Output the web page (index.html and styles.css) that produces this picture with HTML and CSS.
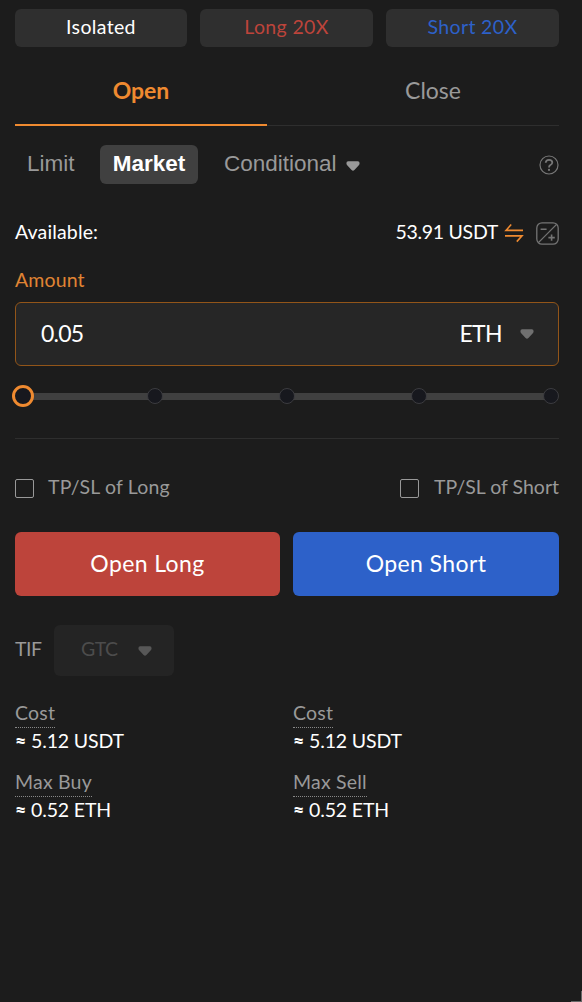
FILE: index.html
```html
<!DOCTYPE html>
<html lang="en">
<head>
<meta charset="utf-8">
<title>Open position</title>
<link rel="stylesheet" href="styles.css">
</head>
<body>
<svg class="defs" width="0" height="0" aria-hidden="true">
  <symbol id="caret" viewBox="0 0 14 10"><path d="M2.2 0.3H11.8Q13.6 0.3 13.6 2.2Q13.6 3.4 12.6 4.4L8.4 9Q7 10.3 5.6 9L1.4 4.4Q0.4 3.4 0.4 2.2Q0.4 0.3 2.2 0.3Z" fill="currentColor"/></symbol>
</svg>
<main class="panel">
  <div class="modes">
    <button class="mode mode-margin">Isolated</button>
    <button class="mode mode-long">Long 20X</button>
    <button class="mode mode-short">Short 20X</button>
  </div>

  <nav class="tabs">
    <a class="tab tab-active"><span>Open</span></a>
    <a class="tab"><span>Close</span></a>
  </nav>

  <div class="types">
    <span class="type type-limit">Limit</span>
    <span class="type type-active">Market</span>
    <span class="type type-conditional">Conditional</span>
    <svg class="caret caret-type"><use href="#caret"/></svg>
    <svg class="help" viewBox="0 0 20 20" fill="none" stroke="#777"><circle cx="10" cy="10" r="9" stroke-width="1.2"/><path d="M6.7 7.8Q6.9 4.8 10 4.8Q13.3 4.8 13.3 7.5Q13.3 9 11.4 10Q10 10.8 10 12.4" stroke-width="1.8"/><circle cx="10" cy="14.9" r="1.1" fill="#777" stroke="none"/></svg>
  </div>

  <div class="available">
    <span class="available-label">Available:</span>
    <span class="balance">53.91 USDT</span>
    <svg class="transfer" viewBox="0 0 20 20" fill="none" stroke="#ef8a30" stroke-width="1.6"><path d="M19 7.4H2L7.2 1.5M1 12.9H18L12.8 18.6"/></svg>
    <svg class="calc" viewBox="0 0 23 23" fill="none" stroke="#747474" stroke-width="1.3"><rect x="0.8" y="0.8" width="21.4" height="21.4" rx="5.2"/><path d="M2.4 20.6L20.6 2.4"/><path d="M4.6 7.3H10.6M12.4 15.6H18.8M15.6 12.4V18.8" stroke-width="1.6"/></svg>
  </div>

  <label class="amount-label">Amount</label>
  <div class="amount">
    <span class="amount-value">0.05</span>
    <span class="amount-unit">ETH</span>
    <svg class="caret caret-unit"><use href="#caret"/></svg>
  </div>

  <div class="slider">
    <i class="handle"></i><i class="dot"></i><i class="dot"></i><i class="dot"></i><i class="dot"></i>
  </div>

  <div class="checks">
    <label class="check"><i class="box"></i><span class="check-long">TP/SL of Long</span></label>
    <label class="check"><i class="box"></i><span class="check-short">TP/SL of Short</span></label>
  </div>

  <div class="actions">
    <button class="action action-long">Open Long</button>
    <button class="action action-short">Open Short</button>
  </div>

  <div class="tif">
    <span class="tif-label">TIF</span>
    <div class="select"><span>GTC</span><svg class="caret caret-tif"><use href="#caret"/></svg></div>
  </div>

  <div class="stats">
    <div class="stat"><span class="stat-label stat-cost">Cost</span><span class="stat-value"><b class="approx">≈</b> 5.12 USDT</span></div>
    <div class="stat"><span class="stat-label stat-cost">Cost</span><span class="stat-value"><b class="approx">≈</b> 5.12 USDT</span></div>
    <div class="stat"><span class="stat-label stat-buy">Max Buy</span><span class="stat-value"><b class="approx">≈</b> 0.52 ETH</span></div>
    <div class="stat"><span class="stat-label stat-sell">Max Sell</span><span class="stat-value"><b class="approx">≈</b> 0.52 ETH</span></div>
  </div>
  <i class="corner"></i>
</main>
</body>
</html>
```
FILE: styles.css
```css
* { box-sizing: border-box; }
body { margin: 0; background: #1c1c1c; color: #fff; font: 19.5px/24px Lato, "Noto Sans", sans-serif; }
button { border: 0; padding: 0; font: inherit; color: inherit; }
.defs { position: absolute; }
.panel { position: relative; width: 582px; height: 1002px; padding: 9px 23px 0 15px; overflow: hidden; white-space: nowrap; }

.modes { display: grid; grid-template-columns: 172px 173px 173px; gap: 13px; height: 38px; }
.mode { background: #2f2f2f; border-radius: 6px; padding-bottom: 2px; letter-spacing: 0.35px; }
.mode-long { color: #bd443b; }
.mode-short { color: #2d61c9; }

.tabs { display: flex; gap: 40px; height: 79px; border-bottom: 1px solid #2e2e2e; }
.tab { flex: 1; height: 79px; padding-top: 31px; text-align: center; font-size: 23px; color: #999; }
.tab-active { color: #ef8a30; font-weight: 700; border-bottom: 2px solid #ef8a30; }

.types { display: flex; align-items: center; height: 39px; margin-top: 19px; font-family: "Liberation Sans", Arial, sans-serif; font-size: 22.5px; color: #999; }
.type { padding-bottom: 2px; }
.type-limit { width: 85px; padding-left: 12px; }
.type-active { width: 98px; height: 39px; line-height: 38px; text-align: center; background: #404040; border-radius: 6px; color: #fff; font-weight: 700; }
.type-conditional { margin-left: 26px; }
.caret { flex: none; width: 14px; height: 10px; color: #999; }
.caret-type { margin: 2px 0 0 9px; }
.help { width: 20px; height: 20px; margin: 0 0 0 auto; }

.available { display: flex; align-items: center; height: 24px; margin-top: 36px; }
.available-label { letter-spacing: 0.15px; }
.balance { margin-left: auto; letter-spacing: -0.3px; }
.transfer { width: 20px; height: 20px; margin: 2px 0 0 6px; }
.calc { width: 23px; height: 23px; margin: 2px 0 0 12px; }

.amount-label { display: block; margin-top: 24px; color: #e08433; letter-spacing: 0.15px; }
.amount { display: flex; align-items: center; height: 64px; margin-top: 10px; padding: 0 24px 2px 25px; border: 1px solid #925519; border-radius: 6px; background: #262626; font-size: 23px; }
.amount-value { letter-spacing: -0.8px; }
.amount-unit { margin-left: auto; letter-spacing: -0.6px; }
.caret-unit { margin: 2px 0 0 18px; color: #707070; }

.slider { display: flex; align-items: center; justify-content: space-between; height: 22px; margin: 19px 0 0 -3px; background: linear-gradient(#404040, #404040) 10px 8px / 526px 7px no-repeat; }
.handle { width: 22px; height: 22px; border: 3px solid #ef8a30; border-radius: 50%; background: #17181e; }
.dot { width: 16px; height: 16px; border: 1px solid #3c3c40; border-radius: 50%; background: #17181e; }
.handle + .dot { margin-left: -3px; }

.checks { display: flex; justify-content: space-between; height: 64px; margin-top: 31px; padding-top: 36px; border-top: 1px solid #2e2e2e; color: #999; }
.check { display: flex; }
.box { width: 19px; height: 19px; margin: 4px 15px 0 0; border: 1.5px solid #999; border-radius: 2px; }
.check-long { margin-left: -1px; letter-spacing: 0.15px; }

.actions { display: grid; grid-template-columns: 265px 266px; gap: 13px; height: 64px; margin-top: 30px; }
.action { padding-bottom: 3px; border-radius: 6px; font-size: 23px; letter-spacing: 0.4px; }
.action-long { background: #bd443b; }
.action-short { background: #2d61c9; }

.tif { display: flex; align-items: center; height: 51px; margin-top: 29px; color: #999; letter-spacing: -0.5px; }
.tif-label { width: 39px; padding-bottom: 3px; }
.select { display: flex; align-items: center; justify-content: space-between; width: 120px; height: 51px; padding: 0 22px 3px 27px; border-radius: 6px; background: #242424; color: #4c4c4c; }
.caret-tif { margin-top: 3px; color: #575757; }

.stats { display: grid; grid-template-columns: 265px 266px; column-gap: 13px; row-gap: 14px; margin-top: 25px; }
.stat { display: flex; flex-direction: column; align-items: flex-start; height: 55px; }
.stat-label { height: 27px; border-bottom: 1px dotted #888; color: #999; letter-spacing: 0.2px; }
.stat-value { margin-top: 1px; letter-spacing: -0.15px; }
.approx { font-weight: 900; }
.corner { position: absolute; right: 0; bottom: 0; width: 11px; height: 11px; border: solid #686868; border-width: 0 1px 1px 0; }
```
